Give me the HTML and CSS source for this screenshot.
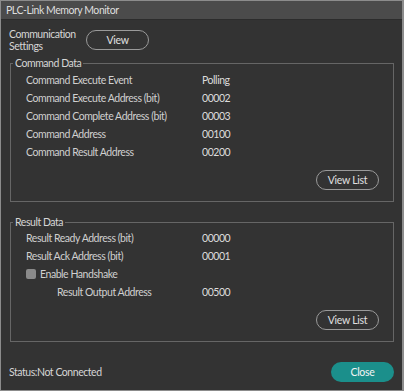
FILE: index.html
```html
<!DOCTYPE html>
<html lang="en">
<head>
    <meta charset="UTF-8">
    <meta name="viewport" content="width=device-width, initial-scale=1.0">
    <title>PLC-Link Memory Monitor</title>
    <link rel="stylesheet" href="styles.css">
</head>
<body>
    <div class="window">
        <div class="titlebar">PLC-Link Memory Monitor</div>

        <!-- Communication settings -->
        <div class="comm">
            <div class="comm-label">Communication<br>Settings</div>
            <button class="btn">View</button>
        </div>

        <!-- Command Data -->
        <fieldset class="group">
            <legend>Command Data</legend>
            <div class="rows">
                <div class="label">Command Execute Event</div><div class="value">Polling</div>
                <div class="label">Command Execute Address (bit)</div><div class="value">00002</div>
                <div class="label">Command Complete Address (bit)</div><div class="value">00003</div>
                <div class="label">Command Address</div><div class="value">00100</div>
                <div class="label">Command Result Address</div><div class="value">00200</div>
            </div>
            <div class="actions">
                <button class="btn btn-list">View List</button>
            </div>
        </fieldset>

        <!-- Result Data -->
        <fieldset class="group group-result">
            <legend>Result Data</legend>
            <div class="rows">
                <div class="label">Result Ready Address (bit)</div><div class="value">00000</div>
                <div class="label">Result Ack Address (bit)</div><div class="value">00001</div>
                <label class="label check"><span class="box"></span>Enable Handshake</label><div class="value"></div>
                <div class="label indent">Result Output Address</div><div class="value">00500</div>
            </div>
            <div class="actions">
                <button class="btn btn-list">View List</button>
            </div>
        </fieldset>

        <div class="status">
            <span>Status:Not Connected</span>
            <button class="btn btn-close">Close</button>
        </div>
    </div>
</body>
</html>
```

FILE: styles.css
```css
body {
    margin: 0;
    font-family: Lato, "Noto Sans", sans-serif;
    font-size: 10.5px;
    letter-spacing: -0.45px;
    color: #d6d6d6;
    background: #fff;
}
.window {
    width: 404px;
    height: 391px;
    box-sizing: border-box;
    border: 1px solid #8c8c8c;
    border-right-width: 2px;
    background: #333333;
}
.titlebar {
    height: 18px;
    line-height: 18px;
    padding-left: 5px;
    background: #4b4b4b;
    border-bottom: 1px solid #2c2c2c;
    color: #dedede;
}
.comm {
    display: flex;
    align-items: center;
    padding: 8px 8px 0 8px;
}
.comm-label {
    width: 77px;
    line-height: 12px;
}
.btn {
    font-family: inherit;
    font-size: 10.5px;
    letter-spacing: -0.3px;
    color: #e0e0e0;
    background: transparent;
    border: 1px solid #9a9a9a;
    border-radius: 10px;
    height: 20px;
    width: 63px;
    padding: 0;
    cursor: pointer;
}
.group {
    margin: 4px 8px 0 9px;
    padding: 1px 14px 11px 15px;
    border: 1px solid #666;
}
.group-result {
    margin-top: 13px;
    padding-top: 0;
    padding-bottom: 11px;
}
.group legend {
    margin-left: -13px;
    padding: 0 2px;
    line-height: 14px;
    color: #d6d6d6;
}
.rows {
    display: grid;
    grid-template-columns: 176px 1fr;
    grid-auto-rows: 18px;
    align-items: center;
}
.label {
    color: #d0d0d0;
}
.value {
    color: #dcdcdc;
}
.check {
    display: flex;
    align-items: center;
    gap: 4px;
}
.box {
    width: 10px;
    height: 10px;
    border-radius: 2px;
    background: #8a8a8a;
}
.indent {
    padding-left: 31px;
}
.actions {
    display: flex;
    justify-content: flex-end;
    margin-top: 9px;
}
.status {
    display: flex;
    justify-content: space-between;
    align-items: center;
    margin-top: 20px;
    padding: 0 8px;
}
.btn-close {
    background: #1b8f8b;
    border: none;
    color: #f4f4f4;
}
```
